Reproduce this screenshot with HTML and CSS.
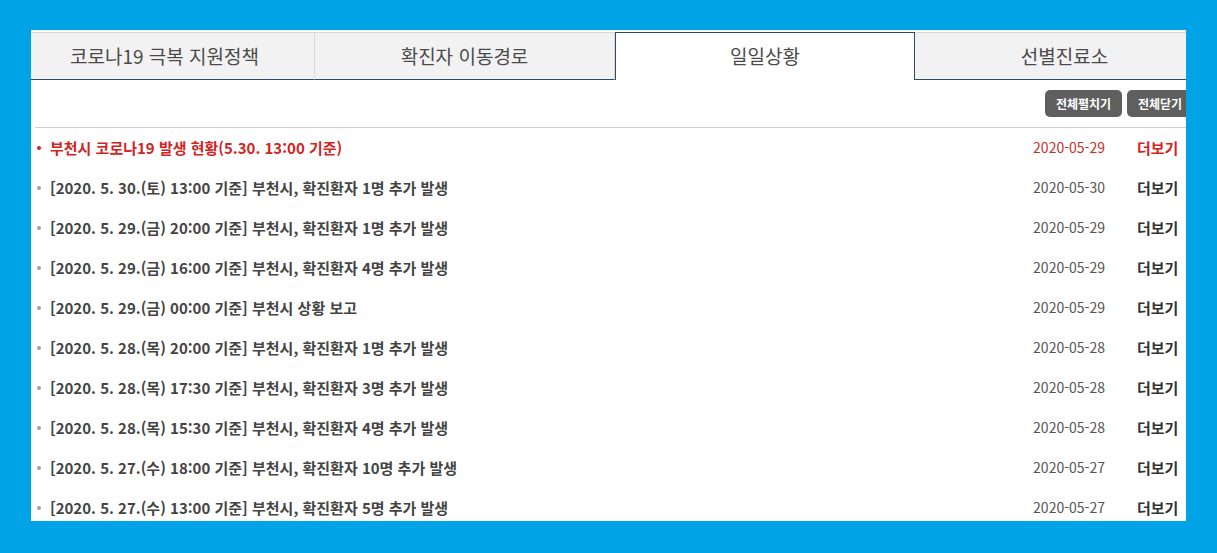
FILE: index.html
```html
<!DOCTYPE html>
<html lang="ko">
<head>
<meta charset="utf-8">
<title>일일상황</title>
<link rel="stylesheet" href="styles.css">
</head>
<body>
<div class="frame">
  <div class="inner">
    <ul class="tabs">
      <li class="tab">코로나19 극복 지원정책</li>
      <li class="tab">확진자 이동경로</li>
      <li class="tab active">일일상황</li>
      <li class="tab">선별진료소</li>
    </ul>
    <div class="toolbar">
      <button class="btn btn-open">전체펼치기</button>
      <button class="btn btn-close">전체닫기</button>
    </div>
    <ul class="list">
      <li class="row notice"><span class="title">부천시 코로나19 발생 현황(5.30. 13:00 기준)</span><span class="date">2020-05-29</span><span class="more">더보기</span></li>
      <li class="row"><span class="title">[2020. 5. 30.(토) 13:00 기준] 부천시, 확진환자 1명 추가 발생</span><span class="date">2020-05-30</span><span class="more">더보기</span></li>
      <li class="row"><span class="title">[2020. 5. 29.(금) 20:00 기준] 부천시, 확진환자 1명 추가 발생</span><span class="date">2020-05-29</span><span class="more">더보기</span></li>
      <li class="row"><span class="title">[2020. 5. 29.(금) 16:00 기준] 부천시, 확진환자 4명 추가 발생</span><span class="date">2020-05-29</span><span class="more">더보기</span></li>
      <li class="row"><span class="title">[2020. 5. 29.(금) 00:00 기준] 부천시 상황 보고</span><span class="date">2020-05-29</span><span class="more">더보기</span></li>
      <li class="row"><span class="title">[2020. 5. 28.(목) 20:00 기준] 부천시, 확진환자 1명 추가 발생</span><span class="date">2020-05-28</span><span class="more">더보기</span></li>
      <li class="row"><span class="title">[2020. 5. 28.(목) 17:30 기준] 부천시, 확진환자 3명 추가 발생</span><span class="date">2020-05-28</span><span class="more">더보기</span></li>
      <li class="row"><span class="title">[2020. 5. 28.(목) 15:30 기준] 부천시, 확진환자 4명 추가 발생</span><span class="date">2020-05-28</span><span class="more">더보기</span></li>
      <li class="row"><span class="title">[2020. 5. 27.(수) 18:00 기준] 부천시, 확진환자 10명 추가 발생</span><span class="date">2020-05-27</span><span class="more">더보기</span></li>
      <li class="row"><span class="title">[2020. 5. 27.(수) 13:00 기준] 부천시, 확진환자 5명 추가 발생</span><span class="date">2020-05-27</span><span class="more">더보기</span></li>
    </ul>
  </div>
</div>
</body>
</html>
```
FILE: styles.css
```css
* { box-sizing: border-box; }
html, body { margin: 0; padding: 0; }
body {
  background: #00a3e6;
  font-family: "Noto Sans CJK KR", "Noto Sans", sans-serif;
  height: 553px;
  overflow: hidden;
}
.frame {
  margin: 30px 0 0 31px;
  width: 1155px;
  height: 491px;
  overflow: hidden;
  background: #fff;
}
.inner {
  margin-left: -16px;
  width: 1200px;
  padding-top: 2px;
}
.tabs {
  list-style: none;
  margin: 0;
  padding: 0;
  display: flex;
}
.tab {
  flex: 0 0 300px;
  height: 48px;
  background: #f2f2f2;
  border-top: 1px solid #d9d9d9;
  border-right: 1px solid #d9d9d9;
  border-bottom: 1px solid #2e4a6b;
  display: flex;
  align-items: center;
  justify-content: center;
  font-size: 19px;
  color: #4a4a4a;
  padding-bottom: 2px;
}
.tab.active {
  background: #fff;
  border: 1px solid #2e4a6b;
  border-bottom: none;
}
.toolbar {
  display: flex;
  justify-content: flex-end;
  gap: 5px;
  padding: 10px 22px 10px 0;
}
.btn {
  height: 27px;
  border: none;
  border-radius: 5px;
  background: #5f5f5f;
  color: #fff;
  font-family: "Noto Sans CJK KR", sans-serif;
  font-weight: 700;
  font-size: 12px;
  padding: 0;
}
.btn-open { width: 77px; }
.btn-close { width: 66px; }
.list {
  list-style: none;
  margin: 0 0 0 20px;
  padding: 0;
  border-top: 1px solid #cfcfcf;
}
.row {
  height: 40px;
  display: flex;
  align-items: center;
  font-size: 15px;
  color: #444;
  padding: 0 15px 2px 0;
}
.row::before {
  content: "";
  width: 4px;
  height: 4px;
  border-radius: 50%;
  background: #a0a0a0;
  margin: 2px 9px 0 2px;
  flex: none;
}
.title {
  flex: 1;
  font-weight: 700;
}
.date {
  width: 100px;
  text-align: right;
  font-size: 14px;
  color: #555;
  margin-right: 32px;
}
.more {
  width: 63px;
  font-weight: 700;
  color: #333;
}
.notice { color: #d3241f; }
.notice::before { background: #d3241f; }
.notice .date { color: #c8302a; }
.notice .more { color: #d3241f; }
```
